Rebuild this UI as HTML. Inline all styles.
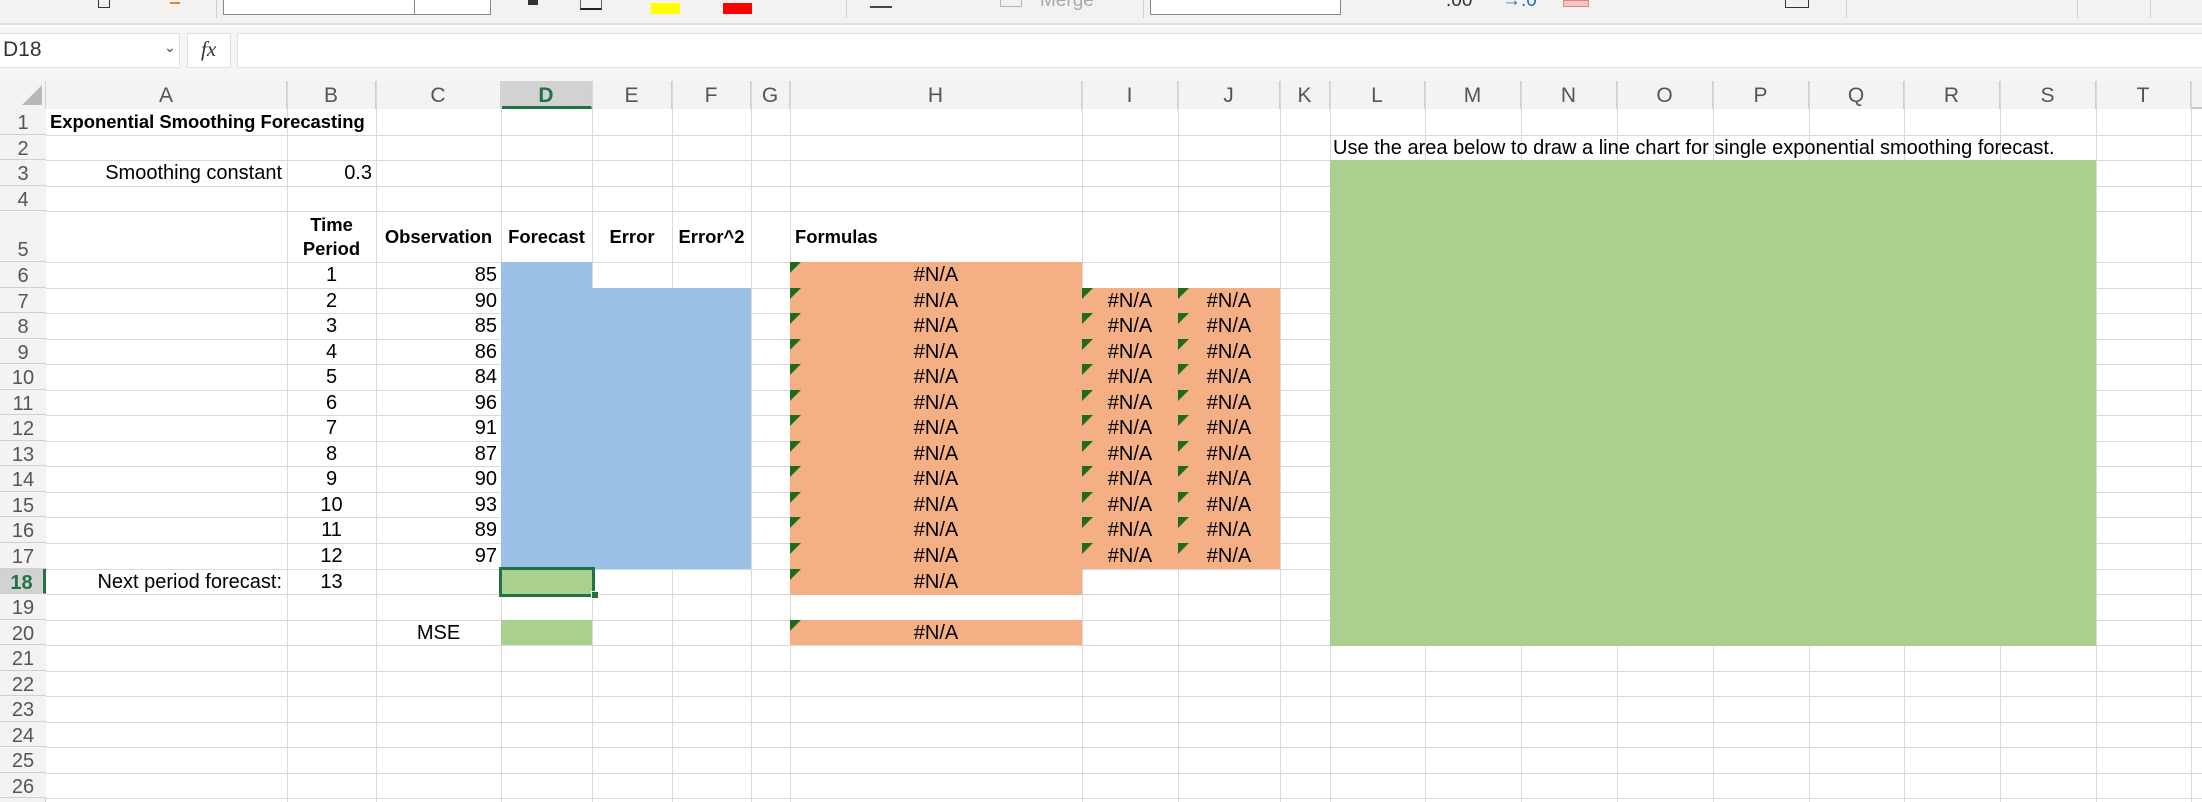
<!DOCTYPE html>
<html><head><meta charset="utf-8"><style>
*{margin:0;padding:0;box-sizing:border-box}
body{width:2202px;height:802px;overflow:hidden;background:#fff;position:relative;font-family:"Liberation Sans",Arial,sans-serif}
div{position:absolute}
.v{width:1px;background:#d9d9d9;top:81px;height:721px}
.h{height:1px;background:#d9d9d9;left:0;width:2202px}
.ch{top:81px;height:28px;line-height:30px;text-align:center;font-size:21px;color:#555;background:#f3f3f3;border-right:1px solid #d0d0d0}
.rh{left:0;width:46px;text-align:center;font-size:20px;color:#555;background:#f3f3f3;border-bottom:1px solid #d0d0d0}
.t{font-size:20px;color:#000;white-space:nowrap;height:25px;line-height:26px}
.b{font-weight:bold;font-size:18.4px}
.na{text-align:center}
.tri{width:0;height:0;border-top:11px solid #1e6b1e;border-right:11px solid transparent}
</style></head><body>
<!-- toolbar -->
<div style="left:0;top:0;width:2202px;height:25px;background:#f3f2f1;border-bottom:2px solid #e1dfdd"></div>
<div style="left:0;top:27px;width:2202px;height:54px;background:#f5f5f5"></div>
<div style="left:223px;top:-2px;width:268px;height:17px;background:#fff;border:1px solid #8a8886"></div>
<div style="left:414px;top:-2px;width:1px;height:17px;background:#8a8886"></div>
<div style="left:216px;top:0;width:1px;height:18px;background:#d0d0d0"></div>
<div style="left:98px;top:0;width:12px;height:8px;border:1px solid #333;border-top:none"></div>
<div style="left:170px;top:0;width:10px;height:4px;border-bottom:2px solid #e8852a"></div>
<div style="left:528px;top:0;width:10px;height:5px;background:#333"></div>
<div style="left:580px;top:0;width:22px;height:10px;border-bottom:2px solid #222;border-left:1px solid #666;border-right:1px solid #666"></div>
<div style="left:651px;top:3px;width:29px;height:11px;background:#ffff00"></div>
<div style="left:723px;top:3px;width:29px;height:11px;background:#ff0000"></div>
<div style="left:846px;top:0;width:1px;height:18px;background:#d0d0d0"></div>
<div style="left:870px;top:6px;width:22px;height:2px;background:#444"></div>
<div style="left:1000px;top:0;width:22px;height:7px;border:1px solid #9bbbdd;border-top:none"></div>
<div style="left:1040px;top:-10px;font-size:19px;color:#aaa">Merge</div>
<div style="left:1143px;top:0;width:1px;height:18px;background:#d0d0d0"></div>
<div style="left:1150px;top:-2px;width:191px;height:17px;background:#fff;border:1px solid #8a8886"></div>
<div style="left:1446px;top:-10px;font-size:19px;color:#333">.00</div>
<div style="left:1502px;top:-10px;font-size:19px;color:#1a73c8">→.0</div>
<div style="left:1563px;top:0;width:26px;height:7px;background:#f4c6c6;border:1px solid #d88"></div>
<div style="left:1785px;top:0;width:24px;height:8px;border:1px solid #333;border-top:none"></div>
<div style="left:1846px;top:0;width:1px;height:18px;background:#d0d0d0"></div>
<div style="left:2077px;top:0;width:1px;height:18px;background:#d0d0d0"></div>
<div style="left:2150px;top:0;width:1px;height:18px;background:#d0d0d0"></div>
<!-- formula bar -->
<div style="left:0;top:33px;width:180px;height:35px;background:#fff;border:1px solid #e1e1e1;border-left:none"></div>
<div style="left:3px;top:38px;font-size:21px;color:#333">D18</div>
<div style="left:164px;top:39px;font-size:14px;color:#444">&#8964;</div>
<div style="left:187px;top:33px;width:44px;height:35px;background:#fff;border:1px solid #e1e1e1"></div>
<div style="left:201px;top:37px;font-size:21px;font-style:italic;font-family:'Liberation Serif',serif;color:#333">fx</div>
<div style="left:237px;top:33px;width:1965px;height:35px;background:#fff;border:1px solid #e1e1e1;border-right:none"></div>
<!-- headers -->
<div style="left:0;top:81px;width:2202px;height:28px;background:#f3f3f3;border-bottom:2px solid #c8c8c8"></div>
<div style="left:0;top:81px;width:46px;height:28px;background:#f3f3f3;border-right:1px solid #d0d0d0"></div>
<div style="left:22px;top:85px;width:0;height:0;border-bottom:20px solid #b8b8b8;border-left:20px solid transparent"></div>
<div class="ch" style="left:46px;width:241px">A</div>
<div class="ch" style="left:287px;width:89px">B</div>
<div class="ch" style="left:376px;width:125px">C</div>
<div class="ch" style="left:501px;width:91px;background:#d2d2d2;color:#217346;font-weight:bold;border-bottom:3px solid #217346">D</div>
<div class="ch" style="left:592px;width:80px">E</div>
<div class="ch" style="left:672px;width:79px">F</div>
<div class="ch" style="left:751px;width:39px">G</div>
<div class="ch" style="left:790px;width:292px">H</div>
<div class="ch" style="left:1082px;width:96px">I</div>
<div class="ch" style="left:1178px;width:102px">J</div>
<div class="ch" style="left:1280px;width:50px">K</div>
<div class="ch" style="left:1330px;width:95px">L</div>
<div class="ch" style="left:1425px;width:96px">M</div>
<div class="ch" style="left:1521px;width:96px">N</div>
<div class="ch" style="left:1617px;width:96px">O</div>
<div class="ch" style="left:1713px;width:96px">P</div>
<div class="ch" style="left:1809px;width:95px">Q</div>
<div class="ch" style="left:1904px;width:96px">R</div>
<div class="ch" style="left:2000px;width:96px">S</div>
<div class="ch" style="left:2096px;width:95px">T</div>
<!-- grid -->
<div class="v" style="left:287px"></div><div class="v" style="left:376px"></div><div class="v" style="left:501px"></div><div class="v" style="left:592px"></div><div class="v" style="left:672px"></div><div class="v" style="left:751px"></div><div class="v" style="left:790px"></div><div class="v" style="left:1082px"></div><div class="v" style="left:1178px"></div><div class="v" style="left:1280px"></div><div class="v" style="left:1330px"></div><div class="v" style="left:1425px"></div><div class="v" style="left:1521px"></div><div class="v" style="left:1617px"></div><div class="v" style="left:1713px"></div><div class="v" style="left:1809px"></div><div class="v" style="left:1904px"></div><div class="v" style="left:2000px"></div><div class="v" style="left:2096px"></div><div class="v" style="left:2191px"></div>
<div class="h" style="top:135px"></div><div class="h" style="top:160px"></div><div class="h" style="top:186px"></div><div class="h" style="top:211px"></div><div class="h" style="top:262px"></div><div class="h" style="top:288px"></div><div class="h" style="top:313px"></div><div class="h" style="top:339px"></div><div class="h" style="top:364px"></div><div class="h" style="top:390px"></div><div class="h" style="top:415px"></div><div class="h" style="top:441px"></div><div class="h" style="top:466px"></div><div class="h" style="top:492px"></div><div class="h" style="top:517px"></div><div class="h" style="top:543px"></div><div class="h" style="top:569px"></div><div class="h" style="top:594px"></div><div class="h" style="top:620px"></div><div class="h" style="top:645px"></div><div class="h" style="top:671px"></div><div class="h" style="top:696px"></div><div class="h" style="top:722px"></div><div class="h" style="top:747px"></div><div class="h" style="top:773px"></div><div class="h" style="top:798px"></div>
<!-- row headers -->
<div style="left:0;top:109px;width:46px;height:693px;background:#f3f3f3;border-right:1px solid #c8c8c8"></div>
<div class="rh" style="top:109px;height:26px;line-height:28px">1</div>
<div class="rh" style="top:135px;height:25px;line-height:28px">2</div>
<div class="rh" style="top:160px;height:26px;line-height:28px">3</div>
<div class="rh" style="top:186px;height:25px;line-height:28px">4</div>
<div class="rh" style="top:211px;height:51px;line-height:78px">5</div>
<div class="rh" style="top:262px;height:26px;line-height:28px">6</div>
<div class="rh" style="top:288px;height:25px;line-height:28px">7</div>
<div class="rh" style="top:313px;height:26px;line-height:28px">8</div>
<div class="rh" style="top:339px;height:25px;line-height:28px">9</div>
<div class="rh" style="top:364px;height:26px;line-height:28px">10</div>
<div class="rh" style="top:390px;height:25px;line-height:28px">11</div>
<div class="rh" style="top:415px;height:26px;line-height:28px">12</div>
<div class="rh" style="top:441px;height:25px;line-height:28px">13</div>
<div class="rh" style="top:466px;height:26px;line-height:28px">14</div>
<div class="rh" style="top:492px;height:25px;line-height:28px">15</div>
<div class="rh" style="top:517px;height:26px;line-height:28px">16</div>
<div class="rh" style="top:543px;height:26px;line-height:28px">17</div>
<div class="rh" style="top:569px;height:25px;line-height:28px;background:#d2d2d2;color:#217346;font-weight:bold;border-right:3px solid #217346">18</div>
<div class="rh" style="top:594px;height:26px;line-height:28px">19</div>
<div class="rh" style="top:620px;height:25px;line-height:28px">20</div>
<div class="rh" style="top:645px;height:26px;line-height:28px">21</div>
<div class="rh" style="top:671px;height:25px;line-height:28px">22</div>
<div class="rh" style="top:696px;height:26px;line-height:28px">23</div>
<div class="rh" style="top:722px;height:25px;line-height:28px">24</div>
<div class="rh" style="top:747px;height:26px;line-height:28px">25</div>
<div class="rh" style="top:773px;height:25px;line-height:28px">26</div>
<!-- fills -->
<div style="left:501px;top:262px;width:91px;height:307px;background:#9bc2e6"></div>
<div style="left:592px;top:288px;width:159px;height:281px;background:#9bc2e6"></div>
<div style="left:790px;top:262px;width:292px;height:333px;background:#f4b084"></div>
<div style="left:790px;top:620px;width:292px;height:25px;background:#f4b084"></div>
<div style="left:1082px;top:288px;width:198px;height:281px;background:#f4b084"></div>
<div style="left:501px;top:569px;width:91px;height:25px;background:#a9d08e"></div>
<div style="left:501px;top:620px;width:91px;height:25px;background:#a9d08e"></div>
<div style="left:1330px;top:160px;width:766px;height:486px;background:#a9d08e"></div>
<div style="left:499px;top:567px;width:96px;height:30px;border:3px solid #217346"></div>
<div style="left:591px;top:591px;width:8px;height:8px;background:#217346;border:1px solid #fff"></div>
<!-- text -->
<div class="t b" style="left:50px;top:109px">Exponential Smoothing Forecasting</div>
<div class="t" style="left:46px;width:236px;text-align:right;top:160px">Smoothing constant</div>
<div class="t" style="left:287px;width:85px;text-align:right;top:160px">0.3</div>
<div class="t b" style="left:287px;width:89px;text-align:center;top:211px;height:51px;line-height:24px;white-space:normal;padding-top:2px">Time<br>Period</div>
<div class="t b" style="left:376px;width:125px;text-align:center;top:224px">Observation</div>
<div class="t b" style="left:501px;width:91px;text-align:center;top:224px">Forecast</div>
<div class="t b" style="left:592px;width:80px;text-align:center;top:224px">Error</div>
<div class="t b" style="left:672px;width:79px;text-align:center;top:224px">Error^2</div>
<div class="t b" style="left:795px;top:224px">Formulas</div>
<div class="t" style="left:1333px;top:135px">Use the area below to draw a line chart for single exponential smoothing forecast.</div>
<div class="t" style="left:46px;width:236px;text-align:right;top:569px">Next period forecast:</div>
<div class="t" style="left:376px;width:125px;text-align:center;top:620px">MSE</div>

<div class="t" style="left:287px;width:89px;text-align:center;top:262px">1</div><div class="t" style="left:376px;width:121px;text-align:right;top:262px">85</div>
<div class="t" style="left:287px;width:89px;text-align:center;top:288px">2</div><div class="t" style="left:376px;width:121px;text-align:right;top:288px">90</div>
<div class="t" style="left:287px;width:89px;text-align:center;top:313px">3</div><div class="t" style="left:376px;width:121px;text-align:right;top:313px">85</div>
<div class="t" style="left:287px;width:89px;text-align:center;top:339px">4</div><div class="t" style="left:376px;width:121px;text-align:right;top:339px">86</div>
<div class="t" style="left:287px;width:89px;text-align:center;top:364px">5</div><div class="t" style="left:376px;width:121px;text-align:right;top:364px">84</div>
<div class="t" style="left:287px;width:89px;text-align:center;top:390px">6</div><div class="t" style="left:376px;width:121px;text-align:right;top:390px">96</div>
<div class="t" style="left:287px;width:89px;text-align:center;top:415px">7</div><div class="t" style="left:376px;width:121px;text-align:right;top:415px">91</div>
<div class="t" style="left:287px;width:89px;text-align:center;top:441px">8</div><div class="t" style="left:376px;width:121px;text-align:right;top:441px">87</div>
<div class="t" style="left:287px;width:89px;text-align:center;top:466px">9</div><div class="t" style="left:376px;width:121px;text-align:right;top:466px">90</div>
<div class="t" style="left:287px;width:89px;text-align:center;top:492px">10</div><div class="t" style="left:376px;width:121px;text-align:right;top:492px">93</div>
<div class="t" style="left:287px;width:89px;text-align:center;top:517px">11</div><div class="t" style="left:376px;width:121px;text-align:right;top:517px">89</div>
<div class="t" style="left:287px;width:89px;text-align:center;top:543px">12</div><div class="t" style="left:376px;width:121px;text-align:right;top:543px">97</div>
<div class="t" style="left:287px;width:89px;text-align:center;top:569px">13</div>

<!-- H column -->
<div class="t na" style="left:790px;width:292px;top:262px">#N/A</div><div class="tri" style="left:790px;top:262px"></div>
<div class="t na" style="left:790px;width:292px;top:288px">#N/A</div><div class="tri" style="left:790px;top:288px"></div>
<div class="t na" style="left:790px;width:292px;top:313px">#N/A</div><div class="tri" style="left:790px;top:313px"></div>
<div class="t na" style="left:790px;width:292px;top:339px">#N/A</div><div class="tri" style="left:790px;top:339px"></div>
<div class="t na" style="left:790px;width:292px;top:364px">#N/A</div><div class="tri" style="left:790px;top:364px"></div>
<div class="t na" style="left:790px;width:292px;top:390px">#N/A</div><div class="tri" style="left:790px;top:390px"></div>
<div class="t na" style="left:790px;width:292px;top:415px">#N/A</div><div class="tri" style="left:790px;top:415px"></div>
<div class="t na" style="left:790px;width:292px;top:441px">#N/A</div><div class="tri" style="left:790px;top:441px"></div>
<div class="t na" style="left:790px;width:292px;top:466px">#N/A</div><div class="tri" style="left:790px;top:466px"></div>
<div class="t na" style="left:790px;width:292px;top:492px">#N/A</div><div class="tri" style="left:790px;top:492px"></div>
<div class="t na" style="left:790px;width:292px;top:517px">#N/A</div><div class="tri" style="left:790px;top:517px"></div>
<div class="t na" style="left:790px;width:292px;top:543px">#N/A</div><div class="tri" style="left:790px;top:543px"></div>
<div class="t na" style="left:790px;width:292px;top:569px">#N/A</div><div class="tri" style="left:790px;top:569px"></div>
<div class="t na" style="left:790px;width:292px;top:620px">#N/A</div><div class="tri" style="left:790px;top:620px"></div>
<!-- I,J -->
<div class="t na" style="left:1082px;width:96px;top:288px">#N/A</div><div class="tri" style="left:1082px;top:288px"></div><div class="t na" style="left:1178px;width:102px;top:288px">#N/A</div><div class="tri" style="left:1178px;top:288px"></div>
<div class="t na" style="left:1082px;width:96px;top:313px">#N/A</div><div class="tri" style="left:1082px;top:313px"></div><div class="t na" style="left:1178px;width:102px;top:313px">#N/A</div><div class="tri" style="left:1178px;top:313px"></div>
<div class="t na" style="left:1082px;width:96px;top:339px">#N/A</div><div class="tri" style="left:1082px;top:339px"></div><div class="t na" style="left:1178px;width:102px;top:339px">#N/A</div><div class="tri" style="left:1178px;top:339px"></div>
<div class="t na" style="left:1082px;width:96px;top:364px">#N/A</div><div class="tri" style="left:1082px;top:364px"></div><div class="t na" style="left:1178px;width:102px;top:364px">#N/A</div><div class="tri" style="left:1178px;top:364px"></div>
<div class="t na" style="left:1082px;width:96px;top:390px">#N/A</div><div class="tri" style="left:1082px;top:390px"></div><div class="t na" style="left:1178px;width:102px;top:390px">#N/A</div><div class="tri" style="left:1178px;top:390px"></div>
<div class="t na" style="left:1082px;width:96px;top:415px">#N/A</div><div class="tri" style="left:1082px;top:415px"></div><div class="t na" style="left:1178px;width:102px;top:415px">#N/A</div><div class="tri" style="left:1178px;top:415px"></div>
<div class="t na" style="left:1082px;width:96px;top:441px">#N/A</div><div class="tri" style="left:1082px;top:441px"></div><div class="t na" style="left:1178px;width:102px;top:441px">#N/A</div><div class="tri" style="left:1178px;top:441px"></div>
<div class="t na" style="left:1082px;width:96px;top:466px">#N/A</div><div class="tri" style="left:1082px;top:466px"></div><div class="t na" style="left:1178px;width:102px;top:466px">#N/A</div><div class="tri" style="left:1178px;top:466px"></div>
<div class="t na" style="left:1082px;width:96px;top:492px">#N/A</div><div class="tri" style="left:1082px;top:492px"></div><div class="t na" style="left:1178px;width:102px;top:492px">#N/A</div><div class="tri" style="left:1178px;top:492px"></div>
<div class="t na" style="left:1082px;width:96px;top:517px">#N/A</div><div class="tri" style="left:1082px;top:517px"></div><div class="t na" style="left:1178px;width:102px;top:517px">#N/A</div><div class="tri" style="left:1178px;top:517px"></div>
<div class="t na" style="left:1082px;width:96px;top:543px">#N/A</div><div class="tri" style="left:1082px;top:543px"></div><div class="t na" style="left:1178px;width:102px;top:543px">#N/A</div><div class="tri" style="left:1178px;top:543px"></div>
</body></html>
